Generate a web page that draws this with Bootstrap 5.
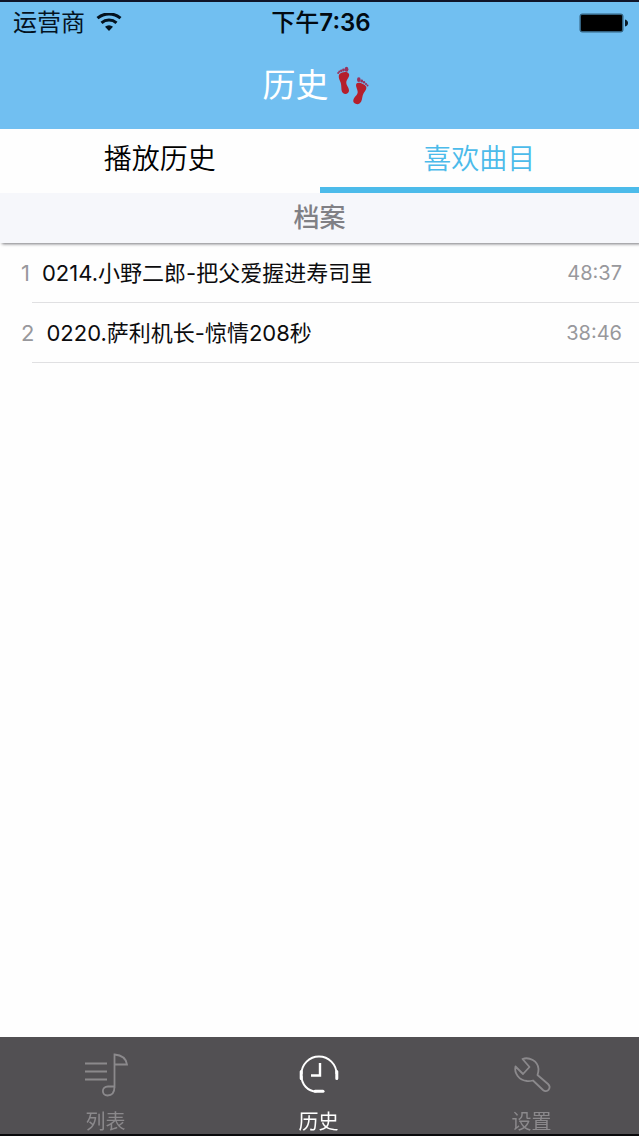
<!DOCTYPE html>
<html lang="zh-CN">
<head>
<meta charset="utf-8">
<meta name="viewport" content="width=device-width, initial-scale=1">
<title>历史</title>
<link href="https://cdn.jsdelivr.net/npm/bootstrap@5.3.0/dist/css/bootstrap.min.css" rel="stylesheet">
<style>
  body {
    font-family: Inter, "Noto Sans CJK SC", sans-serif;
    color: #0c0c0e;
    background: #fefefe;
  }
  .app-header {
    background: #71bff1;
    border-top: 2px solid #101428;
    color: #fff;
  }
  .status-bar {
    height: 40px;
    padding: 0 10px 0 13px;
    font-size: 24px;
    line-height: 42px;
    color: #04121f;
  }
  .status-time { font-weight: 600; color: #020a12; }
  .status-time span { font-weight: 500; }
  .app-title {
    height: 87px;
    padding-right: 8px;
    font-size: 33px;
    font-weight: 400;
    line-height: 87px;
  }
  .history-tabs .nav-link {
    height: 64px;
    padding: 2px 0 0;
    border: 0;
    border-bottom: 6px solid transparent;
    border-radius: 0;
    font-size: 28px;
    font-weight: 350;
    line-height: 56px;
    color: #000;
    background: #fefefe;
  }
  .history-tabs .nav-link.active {
    color: #4cbbea;
    border-color: #4cbbea;
  }
  .section-title {
    height: 50px;
    font-size: 26px;
    font-weight: 500;
    line-height: 50px;
    color: #808085;
    background: #f6f7fb;
    box-shadow: 2px 1px 3px #77777c;
  }
  .track-list { padding-left: 32px; }
  .track {
    height: 60px;
    padding: 0 17px 0 0;
    border: 0;
    border-bottom: 1px solid #e0e0e2;
    background: transparent;
    color: #0c0c0e;
    font-size: 22px;
    line-height: 60px;
  }
  .track-number {
    margin-left: -11px;
    margin-right: 12px;
    color: #98989c;
  }
  .track-time { font-size: 20px; color: #98989c; }
  .tab-bar {
    height: 99px;
    background: #525053;
    border-bottom: 2px solid #09090b;
  }
  .tab-bar .nav-link {
    padding: 16px 2px 0 0;
    font-size: 20px;
    line-height: 30px;
    color: #8b898c;
  }
  .tab-bar .nav-link.active { color: #fff; }
  .tab-bar svg { margin-bottom: 10px; }
</style>
<script src="https://cdn.jsdelivr.net/npm/bootstrap@5.3.0/dist/js/bootstrap.bundle.min.js"></script>
</head>
<body class="d-flex flex-column min-vh-100">

<header class="app-header">
  <div class="status-bar row g-0">
    <div class="col d-flex align-items-center">
      <span>运营商</span>
      <svg class="ms-2" width="32" height="20" viewBox="0 0 32 20" fill="none" stroke="#04121f" stroke-width="3" aria-label="Wi-Fi">
        <path d="M4.500 5.200a17.500 17.500 0 0 1 23 0M8.500 9.800a11.500 11.500 0 0 1 15 0"/>
        <path d="M16 18l-4-4.300a6 6 0 0 1 8 0z" fill="#04121f" stroke="none"/>
      </svg>
    </div>
    <time class="status-time col-auto"><span>下午</span>7:36</time>
    <div class="col d-flex align-items-center justify-content-end">
      <svg width="50" height="20" viewBox="0 0 50 20" aria-label="电池">
        <rect x=".5" y=".5" width="44" height="19" rx="3" fill="#33617f"/>
        <rect x="2" y="2" width="41" height="16" rx="1" fill="#000"/>
        <path d="M46 6.500q3 1 3 3.500t-3 3.500z" fill="#0a1a26"/>
      </svg>
    </div>
  </div>
  <h1 class="app-title d-flex justify-content-center align-items-center m-0">
    <span>历史</span>
    <svg class="ms-2" width="32" height="40" viewBox="0 0 32 40" aria-hidden="true">
      <g fill="#b51f2c">
        <path d="M2.500 8C5 5.500 11 5 12 8c1 3-2.300 5-2.700 8-.4 3 2.700 5.500 2.700 8.500 0 2-1.800 3.500-3.500 3.500s-3.700-1.500-4-4C4.200 20 4.500 18 3 15 2 12.500 1 10 2.500 8z"/>
        <path d="M19.500 17.500c2-2 8 .5 9.500 3 1.200 2.200-1 4.500-2.500 7-1.500 2.800-1 5-2.300 8-1 2-3 3-5 2.500-2.500-.6-3.500-2.500-2.700-4.500 1-3 4.200-4.500 4.200-7.500 0-3-2.700-6-1.200-8.500z"/>
      </g>
      <g fill="#99315c">
        <ellipse cx="9.500" cy="3.300" rx="1.900" ry="2.500"/>
        <circle cx="6.500" cy="4" r="1.400"/><circle cx="4.300" cy="4.800" r="1.200"/><circle cx="2.400" cy="5.700" r="1.100"/><circle cx="1.200" cy="7" r="1"/>
        <ellipse cx="21.800" cy="13.700" rx="1.800" ry="2.400"/>
        <circle cx="24.700" cy="15" r="1.400"/><circle cx="27" cy="16.300" r="1.200"/><circle cx="29" cy="18" r="1.100"/><circle cx="30.500" cy="19.600" r="1"/>
      </g>
    </svg>
  </h1>
</header>

<main class="flex-grow-1">
  <div class="history-tabs nav nav-fill nav-justified" role="tablist">
    <button type="button" class="nav-link nav-item" role="tab" aria-selected="false">播放历史</button>
    <button type="button" class="nav-link nav-item active" role="tab" aria-selected="true">喜欢曲目</button>
  </div>
  <h2 class="section-title text-center m-0">档案</h2>
  <ol class="track-list list-unstyled m-0">
    <li class="track d-flex">
      <span class="track-number">1</span>
      <span class="flex-grow-1 text-truncate">0214.小野二郎-把父爱握进寿司里</span>
      <time class="track-time">48:37</time>
    </li>
    <li class="track d-flex">
      <span class="track-number">2</span>
      <span class="flex-grow-1 text-truncate">0220.萨利机长-惊情208秒</span>
      <time class="track-time">38:46</time>
    </li>
  </ol>
</main>

<nav class="tab-bar nav nav-fill nav-justified sticky-bottom">
  <a class="nav-link nav-item d-flex flex-column align-items-center" href="#list">
    <svg width="44" height="44" viewBox="0 0 44 44" fill="none" stroke="currentColor" stroke-width="1.800">
      <path d="M1 10.500h22M1 18.500h22M1 26.500h22"/>
      <path d="M30.500 35V1.500C36 2 42 4 43 11.500H31M30.500 33.500H24c-7 0-6.500 9-.5 9 4.500 0 7-3 7-9z"/>
    </svg>
    <span>列表</span>
  </a>
  <a class="nav-link nav-item active d-flex flex-column align-items-center" href="#history" aria-current="page">
    <svg width="44" height="44" viewBox="0 0 44 44" fill="none" stroke="currentColor" stroke-width="2">
      <path d="M4.500 21a17.500 17.500 0 0 1 35 0M4.500 23c0 8 6 15.500 15 15.500"/>
      <path d="M18 38.300h8" stroke-width="3" stroke-linecap="round"/>
      <path d="M4.200 18.500v7M39.800 18.500v7" stroke-width="3" stroke-linecap="round"/>
      <path d="M23 10v12.500h-9" stroke-width="2.400"/>
    </svg>
    <span>历史</span>
  </a>
  <a class="nav-link nav-item d-flex flex-column align-items-center" href="#settings">
    <svg width="44" height="44" viewBox="0 0 44 44" fill="none" stroke="currentColor" stroke-width="1.800" stroke-linejoin="round">
      <path d="M12.500 6C19 3.500 28 8 28.500 16c0 2-.3 4-1 6l10.500 9c4 4-1 9.500-5 6L23 27.500c-2 .5-4 1-6 .5C9 27.500 4 20 5.500 13.500l7.500 7.500 6.500-7z"/>
    </svg>
    <span>设置</span>
  </a>
</nav>

</body>
</html>
